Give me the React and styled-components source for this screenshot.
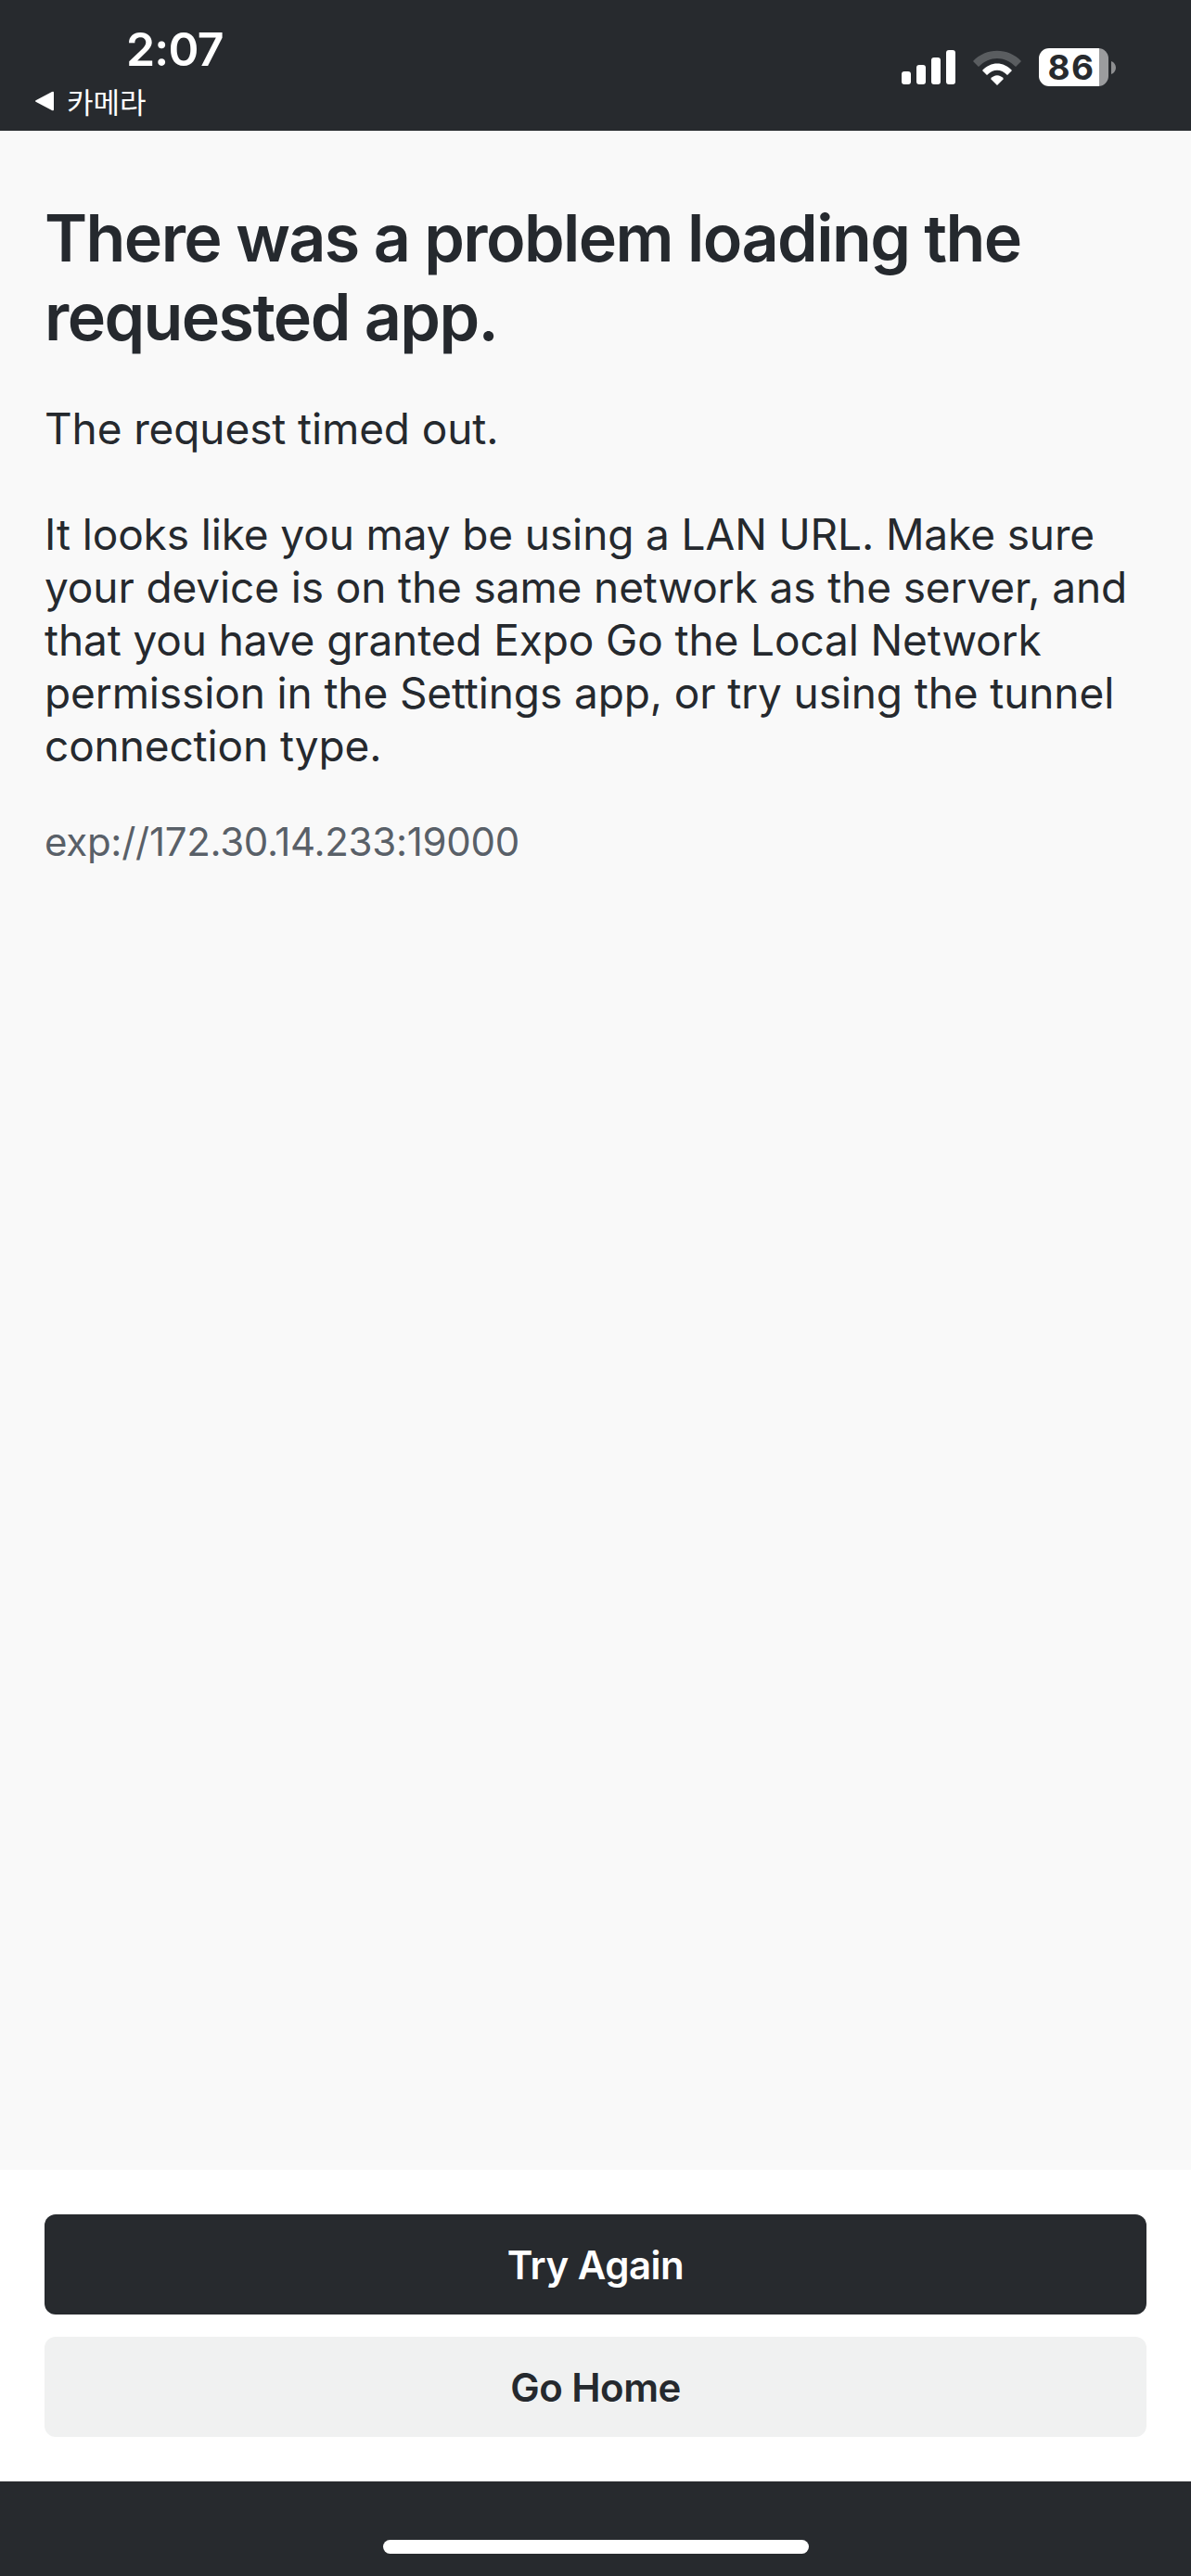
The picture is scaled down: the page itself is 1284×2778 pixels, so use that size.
import styled, { createGlobalStyle } from 'styled-components'

const GlobalStyle = createGlobalStyle`
  html, body {
    margin: 0;
    padding: 0;
    background: #ffffff;
  }
  * {
    box-sizing: border-box;
  }
`

const Page = styled.div`
  display: flex;
  flex-direction: column;
  width: 1284px;
  height: 2778px;
  font-family: Inter, "Noto Sans", sans-serif;
  color: #25292e;
`

const StatusBar = styled.header`
  display: flex;
  justify-content: space-between;
  height: 141px;
  padding: 0 81px 0 37px;
  background: #272a2e;
  color: #ffffff;
`

const LeftStatus = styled.div`
  display: flex;
  flex-direction: column;
  padding-top: 24px;
`

const Clock = styled.span`
  margin-left: 99px;
  font-size: 50px;
  line-height: 58px;
  font-weight: 600;
  letter-spacing: -0.8px;
`

const BackLink = styled.div`
  display: flex;
  align-items: center;
  gap: 13px;
  margin-top: 9px;
  font-family: "Noto Sans CJK KR", sans-serif;
  font-size: 31px;
  line-height: 36px;
`

const RightStatus = styled.div`
  display: flex;
  align-items: center;
  gap: 19px;
  padding-top: 4px;
`

const BatteryWrap = styled.div`
  display: flex;
  align-items: center;
  gap: 3px;
`

const BatteryBody = styled.div`
  display: flex;
  align-items: center;
  justify-content: center;
  width: 75px;
  height: 41px;
  padding-right: 5px;
  border-radius: 11px;
  background: linear-gradient(to right, #ffffff 87%, #9b9c9e 87%);
  color: #272a2e;
  font-size: 37px;
  font-weight: 700;
  letter-spacing: 1.5px;
`

const Content = styled.main`
  flex: 1;
  padding: 73px 48px 0;
  background: #f9f9f9;
`

const Title = styled.h1`
  margin: 0 0 50px;
  font-size: 70px;
  line-height: 85px;
  font-weight: 600;
  letter-spacing: -1.6px;
`

const Message = styled.p`
  margin: 0 0 57px;
  font-size: 46px;
  line-height: 57px;
  font-weight: 400;
  letter-spacing: -0.12px;
`

const ServerUrl = styled.p`
  margin: -11px 0 0;
  font-size: 42px;
  line-height: 57px;
  letter-spacing: -0.28px;
  color: #596068;
`

const Actions = styled.section`
  display: flex;
  flex-direction: column;
  gap: 24px;
  padding: 48px;
  background: #ffffff;
`

const Button = styled.button`
  height: 108px;
  border: 0;
  border-radius: 12px;
  background: ${({ $primary }) => ($primary ? '#272a2e' : '#f0f1f1')};
  color: ${({ $primary }) => ($primary ? '#ffffff' : '#25292e')};
  font-family: inherit;
  font-size: 42px;
  font-weight: 600;
  letter-spacing: -0.5px;
`

const BottomBar = styled.footer`
  display: flex;
  justify-content: center;
  height: 102px;
  padding-top: 63px;
  background: #272a2e;
`

const HomeIndicator = styled.div`
  width: 459px;
  height: 15px;
  border-radius: 8px;
  background: #ffffff;
`

function SignalIcon() {
  return (
    <svg width="58" height="37" viewBox="0 0 58 37" fill="#ffffff">
      <rect x="0" y="23" width="10" height="14" rx="3" />
      <rect x="16" y="16" width="10" height="21" rx="3" />
      <rect x="32" y="8" width="10" height="29" rx="3" />
      <rect x="48" y="0" width="10" height="37" rx="3" />
    </svg>
  )
}

function WifiIcon() {
  return (
    <svg width="52" height="38" viewBox="0 0 52 38">
      <path d="M0 12 C14 -3 38 -3 52 12 L46 18 C34 6 18 6 6 18 Z" fill="#5a5d60" />
      <path d="M10 22 C19 12 33 12 42 22 L37 27 C30 20 22 20 15 27 Z" fill="#ffffff" />
      <path d="M19 31 C23 26 29 26 33 31 L26 38 Z" fill="#ffffff" />
    </svg>
  )
}

function BatteryNub() {
  return (
    <svg width="5" height="14" viewBox="0 0 5 14">
      <path d="M0 0 C3 1 5 4 5 7 C5 10 3 13 0 14 Z" fill="#8e8f91" />
    </svg>
  )
}

function BackArrow() {
  return (
    <svg width="22" height="22" viewBox="0 0 22 22">
      <path d="M21 2 V20 Q21 22 19 21 L2 12 Q0 11 2 10 L19 1 Q21 0 21 2 Z" fill="#ffffff" />
    </svg>
  )
}

function App() {
  return (
    <Page>
      <GlobalStyle />
      <StatusBar>
        <LeftStatus>
          <Clock>2:07</Clock>
          <BackLink>
            <BackArrow />
            카메라
          </BackLink>
        </LeftStatus>
        <RightStatus>
          <SignalIcon />
          <WifiIcon />
          <BatteryWrap>
            <BatteryBody>86</BatteryBody>
            <BatteryNub />
          </BatteryWrap>
        </RightStatus>
      </StatusBar>
      <Content>
        <Title>There was a problem loading the requested app.</Title>
        <Message>The request timed out.</Message>
        <Message>
          It looks like you may be using a LAN URL. Make sure your device is on the same network as
          the server, and that you have granted Expo Go the Local Network permission in the Settings
          app, or try using the tunnel connection type.
        </Message>
        <ServerUrl>exp://172.30.14.233:19000</ServerUrl>
      </Content>
      <Actions>
        <Button $primary>Try Again</Button>
        <Button>Go Home</Button>
      </Actions>
      <BottomBar>
        <HomeIndicator />
      </BottomBar>
    </Page>
  )
}

export default App
